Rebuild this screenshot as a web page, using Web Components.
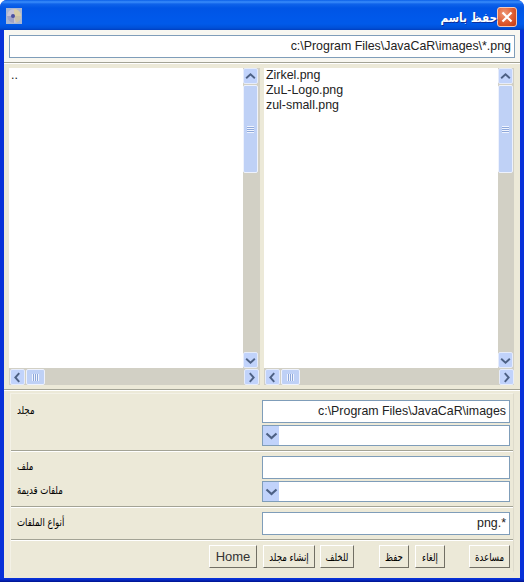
<!DOCTYPE html>
<html lang="ar">
<head>
<meta charset="utf-8">
<title>حفظ باسم</title>
<style>
  html, body { margin: 0; padding: 0; background: #fff; }
  body { font: 12px "Liberation Sans", "DejaVu Sans", sans-serif; color: #111; }
</style>
</head>
<body>
<xp-window>
  <xp-titlebar slot="title">حفظ باسم</xp-titlebar>
  <xp-field class="path" slot="path">c:\Program Files\JavaCaR\images\*.png</xp-field>
  <xp-list slot="left"><div>..</div></xp-list>
  <xp-list slot="right">
    <div>Zirkel.png</div>
    <div>ZuL-Logo.png</div>
    <div>zul-small.png</div>
  </xp-list>
  <xp-row slot="form" label="مجلد"><xp-field>c:\Program Files\JavaCaR\images</xp-field></xp-row>
  <xp-row slot="form"><xp-combo></xp-combo></xp-row>
  <xp-sep slot="form"></xp-sep>
  <xp-row slot="form" label="ملف"><xp-field></xp-field></xp-row>
  <xp-row slot="form" label="ملفات قديمة"><xp-combo></xp-combo></xp-row>
  <xp-sep slot="form"></xp-sep>
  <xp-row slot="form" label="أنواع الملفات"><xp-field>png.*</xp-field></xp-row>
  <xp-sep slot="form"></xp-sep>
  <xp-button slot="buttons" w="48" latin>Home</xp-button>
  <xp-button slot="buttons" w="52" gap="6">إنشاء مجلد</xp-button>
  <xp-button slot="buttons" w="34" gap="5">للخلف</xp-button>
  <xp-button slot="buttons" w="30" gap="25">حفظ</xp-button>
  <xp-button slot="buttons" w="30" gap="6">إلغاء</xp-button>
  <xp-button slot="buttons" w="41" gap="24">مساعدة</xp-button>
</xp-window>

<script>
// small helper so every element gets an open shadow root from a string
class XpBase extends HTMLElement {
  constructor(html) {
    super();
    this.attachShadow({ mode: 'open' });
    this.shadowRoot.innerHTML = html;
  }
}

const chevrons = {
  up: 'M2.5 9.5 L7.5 5 L12.5 9.5',
  down: 'M2.5 5.5 L7.5 10 L12.5 5.5',
  left: 'M9.5 2.5 L5 7.5 L9.5 12.5',
  right: 'M5.5 2.5 L10 7.5 L5.5 12.5'
};

function arrowButton(dir) {
  return `<span class="btn"><svg width="15" height="15" viewBox="0 0 15 15"><path d="${chevrons[dir]}" fill="none" stroke="#4d6185" stroke-width="2.2"/></svg></span>`;
}

class XpWindow extends XpBase {
  constructor() {
    super(`
      <style>
        :host {
          display: flex;
          flex-direction: column;
          width: 524px;
          height: 582px;
          box-sizing: border-box;
          background: linear-gradient(to top, #00138c 0, #0831d9 3px);
          border-radius: 7px 7px 0 0;
          overflow: hidden;
        }
        .body {
          flex: 1;
          display: flex;
          flex-direction: column;
          margin: 0 4px 4px;
          background: #ece9d8;
        }
        .top { padding: 5px 5px 4px; background: #f8f7f1; }
        .sep { height: 1px; background: #a3a395; border-bottom: 1px solid #fff; flex: none; }
        .panes {
          display: grid;
          grid-template-columns: 251px 250px;
          gap: 4px;
          padding: 4px 5px 4px 5px;
          height: 317px;
        }
        .panel {
          flex: 1;
          margin: 2px 6px 6px;
          padding: 6px 3px 3px 0;
          border: 1px solid;
          border-color: #f3f1e6 #dedbcc transparent #f3f1e6;
          display: flex;
          flex-direction: column;
        }
        .buttons { display: flex; justify-content: flex-end; }
      </style>
      <slot name="title"></slot>
      <div class="body">
        <div class="top"><slot name="path"></slot></div>
        <div class="sep"></div>
        <div class="panes"><slot name="left"></slot><slot name="right"></slot></div>
        <div class="sep"></div>
        <div class="panel">
          <slot name="form"></slot>
          <div class="buttons"><slot name="buttons"></slot></div>
        </div>
      </div>`);
  }
}

class XpTitlebar extends XpBase {
  constructor() {
    super(`
      <style>
        :host {
          display: flex;
          align-items: center;
          justify-content: space-between;
          height: 30px;
          flex: none;
          box-sizing: border-box;
          padding: 4px 7px 0 6px;
          background: linear-gradient(#0a5fe8 0, #3a8dfb 2px, #0f63ea 4px, #0055e5 8px, #0058ea 17px, #005aea 24px, #0050d8 28px, #003fc0 30px);
        }
        .right { display: flex; align-items: center; }
        .text {
          font: bold 10.5px "DejaVu Sans", sans-serif;
          color: #fff;
          text-shadow: 1px 1px 0 #0f2f9a;
          display: inline-block;
          transform: scaleY(1.2);
        }
        .close {
          width: 20px;
          height: 20px;
          box-sizing: border-box;
          border: 1px solid #f3c9b8;
          border-radius: 3px;
          background: radial-gradient(circle at 35% 30%, #ef9a78, #dd5a30 55%, #c23a12);
        }
        svg { display: block; }
        .icon { margin-bottom: 2px; }
      </style>
      <svg class="icon" width="16" height="16" viewBox="0 0 16 16">
        <rect width="16" height="16" fill="#a9b6d2"/>
        <circle cx="8" cy="8" r="7" fill="#c7c4d6"/>
        <path d="M8 1a7 7 0 0 1 7 7H8z" fill="#d8cda6"/>
        <path d="M15 8a7 7 0 0 1-5 6.7L8 8z" fill="#c9c0a8"/>
        <path d="M8 15A7 7 0 0 1 1 8H8z" fill="#9ea3c8"/>
        <circle cx="7" cy="8" r="2" fill="#4a4fa0"/>
      </svg>
      <div class="right">
        <span class="text"><slot></slot></span>
        <div class="close">
          <svg width="18" height="18" viewBox="0 0 18 18"><path d="M4.5 4.5 L13.5 13.5 M13.5 4.5 L4.5 13.5" stroke="#fff" stroke-width="2.2"/></svg>
        </div>
      </div>`);
  }
}

class XpField extends XpBase {
  constructor() {
    super(`
      <style>
        :host {
          display: block;
          height: 23px;
          box-sizing: border-box;
          border: 1px solid #7f9db9;
          background: #fff;
          color: #222;
          font: 12.4px "Liberation Sans", sans-serif;
          line-height: 21px;
          text-align: right;
          padding: 0 3px;
          white-space: nowrap;
        }
      </style>
      <slot></slot>`);
  }
}

class XpCombo extends XpBase {
  constructor() {
    super(`
      <style>
        :host {
          display: block;
          height: 21px;
          box-sizing: border-box;
          border: 1px solid #7f9db9;
          background: #fff;
        }
        .btn {
          display: flex;
          align-items: center;
          justify-content: center;
          width: 16px;
          height: 19px;
          background: #c1d3fb;
        }
      </style>
      ${arrowButton('down')}`);
  }
}

class XpList extends XpBase {
  constructor() {
    super(`
      <style>
        :host {
          display: grid;
          grid-template-columns: 234px 16px;
          grid-template-rows: 300px 17px;
          font: 12.4px/15px "Liberation Sans", sans-serif;
          color: #222;
          background: #d2d0c5;
        }
        .view { background: #fff; padding: 0 2px; overflow: hidden; }
        .v, .h { display: flex; background: #d2d0c5; }
        .v { flex-direction: column; }
        .h { padding: 1px 0 0 1px; grid-column: 1 / 3; }
        .btn {
          flex: none;
          display: flex;
          align-items: center;
          justify-content: center;
          width: 15px;
          height: 16px;
          box-sizing: border-box;
          border: 1px solid #e6ecfb;
          border-radius: 2px;
          background: #c1d3fb;
        }
        .thumb {
          flex: none;
          box-sizing: border-box;
          border: 1px solid #eef2fd;
          border-radius: 2px;
          background: #bfd1f6;
          display: flex;
          align-items: center;
          justify-content: center;
        }
        .v .thumb { width: 15px; height: 88px; margin-top: 1px; }
        .h .thumb { width: 19px; height: 16px; margin-left: 1px; }
        .v .grip { width: 7px; height: 7px; background: repeating-linear-gradient(#f0f4fe 0 1px, #8ea8da 1px 2px); }
        .h .grip { width: 7px; height: 7px; background: repeating-linear-gradient(90deg, #f0f4fe 0 1px, #8ea8da 1px 2px); }
        .fill { flex: 1; }
      </style>
      <div class="view"><slot></slot></div>
      <div class="v">
        ${arrowButton('up')}
        <div class="thumb"><div class="grip"></div></div>
        <div class="fill"></div>
        ${arrowButton('down')}
      </div>
      <div class="h">
        ${arrowButton('left')}
        <div class="thumb"><div class="grip"></div></div>
        <div class="fill"></div>
        ${arrowButton('right')}
      </div>`);
  }
}

class XpRow extends XpBase {
  constructor() {
    super(`
      <style>
        :host {
          display: grid;
          grid-template-columns: 1fr 248px;
          align-items: center;
          margin-bottom: 2px;
          padding-left: 6px;
          font: 8.6px "DejaVu Sans", sans-serif;
          color: #000;
        }
        .label { justify-self: start; transform: scaleY(1.3); margin-bottom: 3px; }
      </style>
      <div class="label" dir="rtl"></div>
      <slot></slot>`);
  }
  connectedCallback() {
    this.shadowRoot.querySelector('.label').textContent = this.getAttribute('label') || '';
  }
}

class XpSep extends XpBase {
  constructor() {
    super(`
      <style>
        :host {
          display: block;
          height: 2px;
          margin: 2px -3px 4px 0;
          box-sizing: border-box;
          background: #a3a395;
          border-bottom: 1px solid #fff;
        }
      </style>`);
  }
}

class XpButton extends XpBase {
  constructor() {
    super(`
      <style>
        :host {
          display: flex;
          align-items: center;
          justify-content: center;
          height: 23px;
          box-sizing: border-box;
          border: 1px solid;
          border-color: #fff #716f64 #716f64 #fff;
          background: #ece9d8;
          font: 8.6px "DejaVu Sans", sans-serif;
          color: #000;
          white-space: nowrap;
          overflow: hidden;
        }
        :host([latin]) { font: 13px "Liberation Sans", sans-serif; color: #333; }
        span { display: inline-block; transform: scaleY(1.3); }
        :host([latin]) span { transform: none; }
      </style>
      <span><slot></slot></span>`);
  }
  connectedCallback() {
    this.style.width = this.getAttribute('w') + 'px';
    if (this.hasAttribute('gap')) this.style.marginLeft = this.getAttribute('gap') + 'px';
  }
}

customElements.define('xp-window', XpWindow);
customElements.define('xp-titlebar', XpTitlebar);
customElements.define('xp-field', XpField);
customElements.define('xp-combo', XpCombo);
customElements.define('xp-list', XpList);
customElements.define('xp-row', XpRow);
customElements.define('xp-sep', XpSep);
customElements.define('xp-button', XpButton);
</script>
</body>
</html>
